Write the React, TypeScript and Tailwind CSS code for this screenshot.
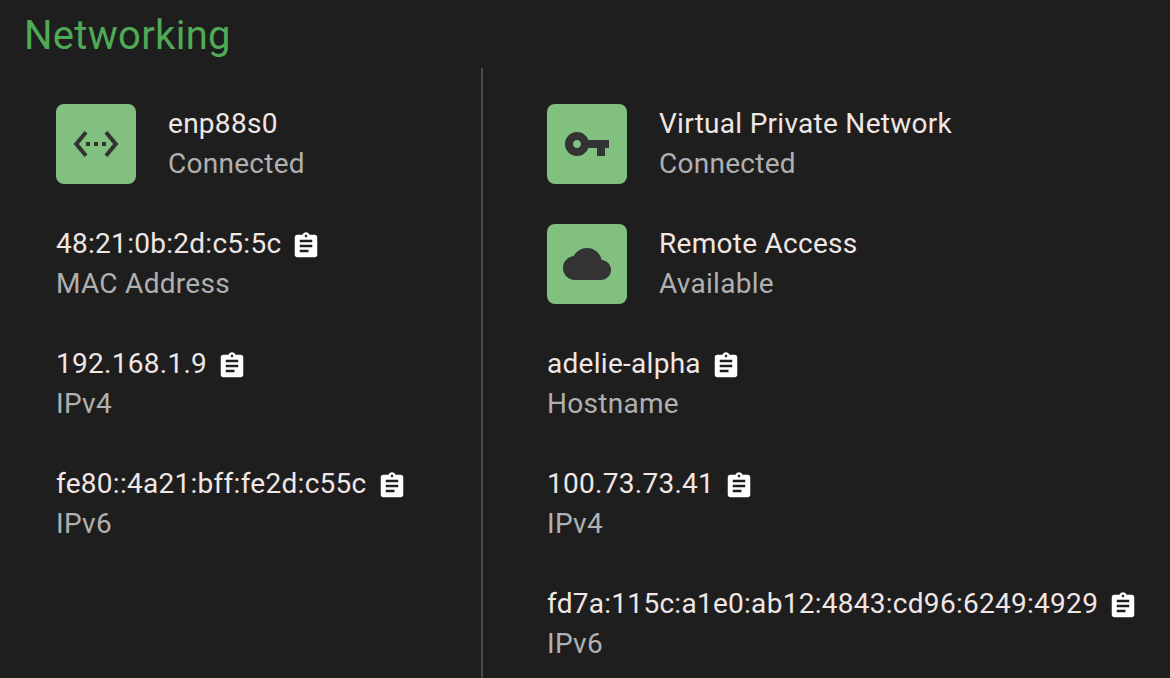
const ethernetPath =
  'M7.77 6.76L6.23 5.48.82 12l5.41 6.52 1.54-1.28L3.42 12l4.35-5.24zM7 13h2v-2H7v2zm10-2h-2v2h2v-2zm-6 2h2v-2h-2v2zm6.77-7.52l-1.54 1.28L20.58 12l-4.35 5.24 1.54 1.28L23.18 12l-5.41-6.52z'
const keyPath =
  'M12.65 10C11.83 7.67 9.61 6 7 6c-3.31 0-6 2.69-6 6s2.69 6 6 6c2.61 0 4.83-1.67 5.65-4H17v4h4v-4h2v-4H12.65zM7 14c-1.1 0-2-.9-2-2s.9-2 2-2 2 .9 2 2-.9 2-2 2z'
const cloudPath =
  'M19.35 10.04C18.67 6.59 15.64 4 12 4 9.11 4 6.6 5.64 5.35 8.04 2.34 8.36 0 10.91 0 14c0 3.31 2.69 6 6 6h13c2.76 0 5-2.24 5-5 0-2.64-2.05-4.78-4.65-4.96z'
const clipboardPath =
  'M19 3h-4.18C14.4 1.84 13.3 1 12 1c-1.3 0-2.4.84-2.82 2H5c-1.1 0-2 .9-2 2v14c0 1.1.9 2 2 2h14c1.1 0 2-.9 2-2V5c0-1.1-.9-2-2-2zm-7 0c.55 0 1 .45 1 1s-.45 1-1 1-1-.45-1-1 .45-1 1-1zm2 14H7v-2h7v2zm3-4H7v-2h10v2zm0-4H7V7h10v2z'

function StatusRow({ icon, title, status }: { icon: string; title: string; status: string }) {
  return (
    <div className="flex h-20 items-center">
      <div className="flex h-20 w-20 shrink-0 items-center justify-center rounded-lg bg-[#81c07e]">
        <svg viewBox="0 0 24 24" className="h-12 w-12 fill-[#333333]">
          <path d={icon} />
        </svg>
      </div>
      <div className="ml-8">
        <p className="text-[#f0e6e4]">{title}</p>
        <p className="text-[#b0b0b0]">{status}</p>
      </div>
    </div>
  )
}

function CopyRow({ value, label }: { value: string; label: string }) {
  return (
    <div className="h-20">
      <div className="flex h-10 items-center">
        <span className="text-[#f0e6e4]">{value}</span>
        <svg viewBox="0 0 24 24" className="mt-1 ml-2.5 h-[30px] w-[30px] fill-white">
          <path d={clipboardPath} />
        </svg>
      </div>
      <p className="text-[#b0b0b0]">{label}</p>
    </div>
  )
}

export default function App() {
  return (
    <div className="h-[678px] overflow-hidden bg-[#1e1e1e] font-['Roboto',sans-serif] text-[28px] leading-10 tracking-[0.28px]">
      <h1 className="h-[68px] pt-3 pl-6 text-[40px] leading-12 font-normal tracking-[0.3px] text-[#50a955]">
        Networking
      </h1>
      <div className="flex">
        <div className="flex h-[700px] w-[483px] flex-col gap-10 border-r-2 border-[#4a4a4a] pt-9 pl-14">
          <StatusRow icon={ethernetPath} title="enp88s0" status="Connected" />
          <CopyRow value="48:21:0b:2d:c5:5c" label="MAC Address" />
          <CopyRow value="192.168.1.9" label="IPv4" />
          <CopyRow value="fe80::4a21:bff:fe2d:c55c" label="IPv6" />
        </div>
        <div className="flex flex-col gap-10 pt-9 pl-16">
          <StatusRow icon={keyPath} title="Virtual Private Network" status="Connected" />
          <StatusRow icon={cloudPath} title="Remote Access" status="Available" />
          <CopyRow value="adelie-alpha" label="Hostname" />
          <CopyRow value="100.73.73.41" label="IPv4" />
          <CopyRow value="fd7a:115c:a1e0:ab12:4843:cd96:6249:4929" label="IPv6" />
        </div>
      </div>
    </div>
  )
}
